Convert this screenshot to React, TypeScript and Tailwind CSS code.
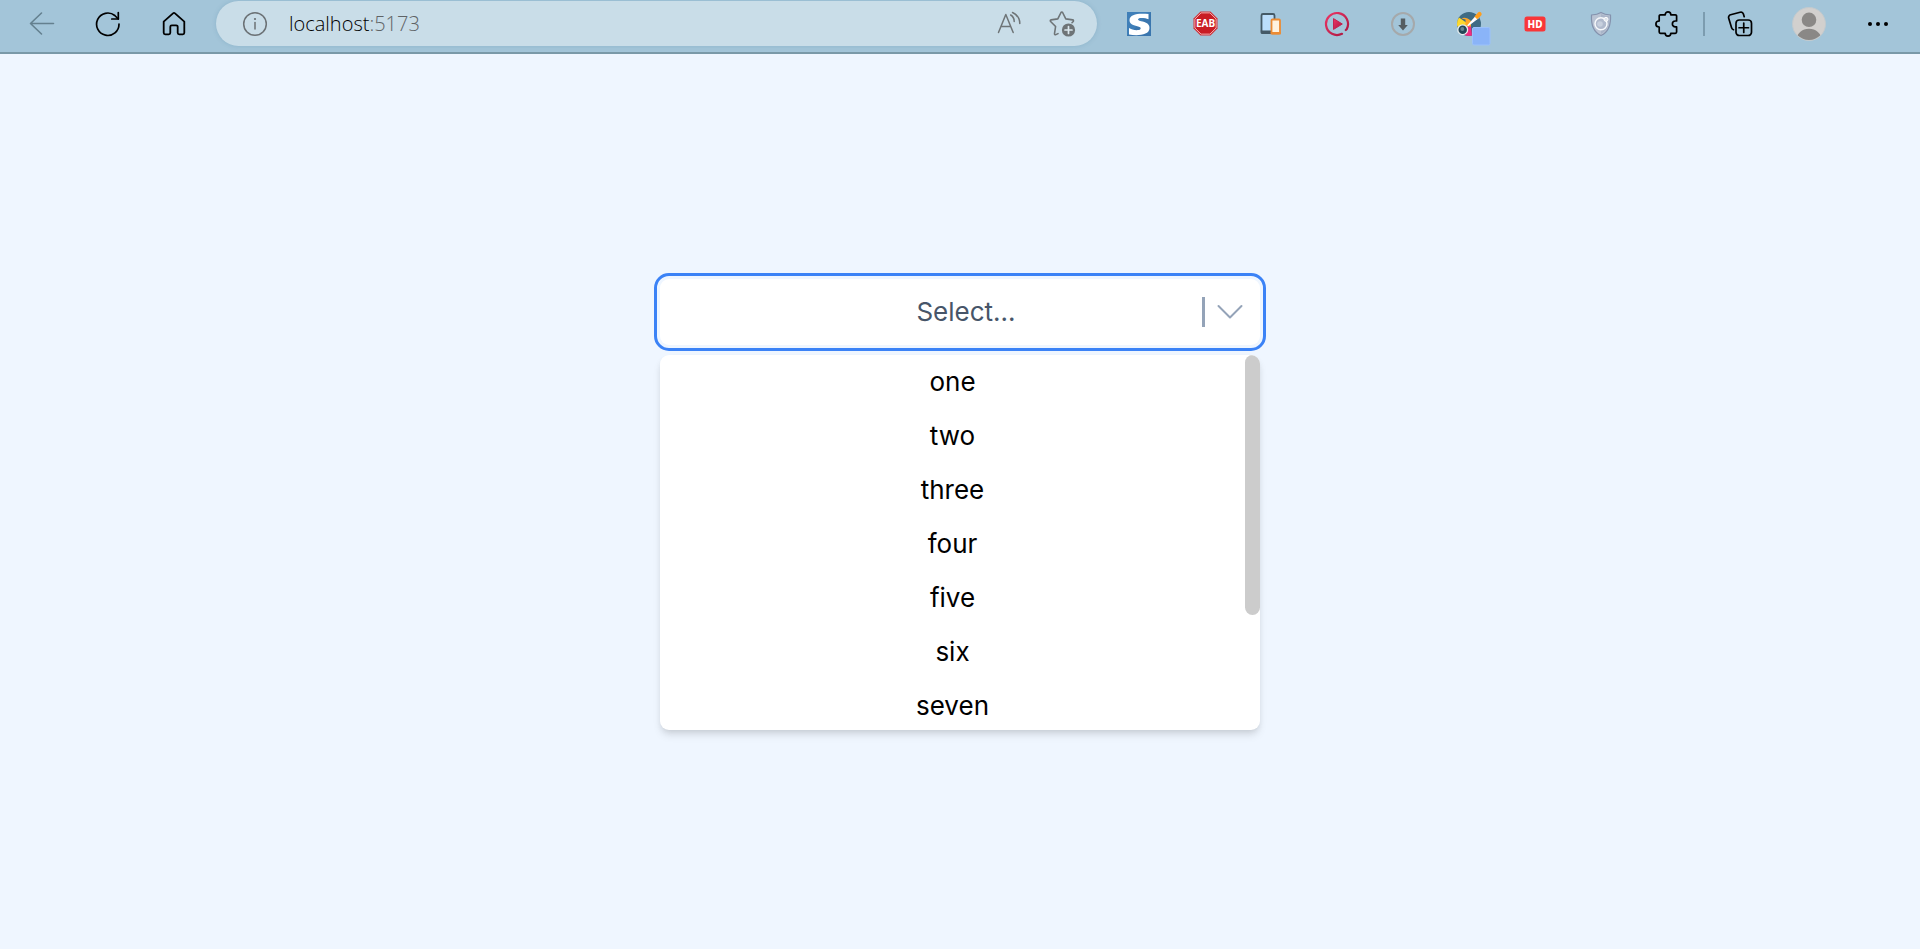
import { useState, type ReactNode } from "react";

const OPTIONS = ["one", "two", "three", "four", "five", "six", "seven"];

function ToolButton({ label, width = "w-[66px]", children }: { label: string; width?: string; children: ReactNode }) {
  return (
    <button type="button" aria-label={label} className={`flex h-[45px] shrink-0 items-center justify-center ${width}`}>
      {children}
    </button>
  );
}

function BackIcon() {
  return (
    <svg width="26" height="26" viewBox="0 0 26 26" fill="none" stroke="#64808f" strokeWidth="1.6" strokeLinecap="round" strokeLinejoin="round">
      <path d="M24.5 12.5H1.5M12.5 2L1.5 12.5L12.5 23" />
    </svg>
  );
}

function RefreshIcon() {
  return (
    <svg width="26" height="26" viewBox="0 0 26 26" fill="none" stroke="#000" strokeWidth="1.7" strokeLinecap="round" strokeLinejoin="round">
      <path d="M24 13a11.200 11.200 0 1 1-4.200-8.500L23.300 8" />
      <path d="M23.300 1.500V8h-6.500" />
    </svg>
  );
}

function HomeIcon() {
  return (
    <svg width="26" height="26" viewBox="0 0 26 26" fill="none" stroke="#000" strokeWidth="1.8" strokeLinecap="round" strokeLinejoin="round">
      <path d="M2.700 10.600L12 2.300a1.500 1.500 0 0 1 2 0l9.300 8.300v11.200a1.500 1.500 0 0 1-1.500 1.500h-3.600a1.500 1.500 0 0 1-1.500-1.500v-6a1.500 1.500 0 0 0-1.500-1.500h-4.400a1.500 1.500 0 0 0-1.500 1.500v6a1.500 1.500 0 0 1-1.500 1.500H4.200a1.500 1.500 0 0 1-1.500-1.500z" />
    </svg>
  );
}

function InfoIcon() {
  return (
    <svg width="26" height="26" viewBox="0 0 26 26" fill="none" stroke="#6b7175" strokeWidth="1.5" strokeLinecap="round">
      <circle cx="13" cy="13" r="11.300" />
      <path d="M13 11.500v6.500" />
      <circle cx="13" cy="8" r="1.100" fill="#6b7175" stroke="none" />
    </svg>
  );
}

function ReadAloudIcon() {
  return (
    <svg width="26" height="26" viewBox="0 0 26 26" fill="none" stroke="#6e7477" strokeWidth="1.5" strokeLinecap="round" strokeLinejoin="round">
      <path d="M2.500 21.500L9.800 3.500L17.200 21.500M5 15.500h9.700" />
      <path d="M14.700 4a7.500 7.500 0 0 1 3.500 6.500M16.500 1.500a12 12 0 0 1 7.300 11" />
    </svg>
  );
}

function FavoriteIcon() {
  return (
    <svg width="28" height="28" viewBox="0 0 28 28" fill="none" stroke="#6e7477" strokeWidth="1.6" strokeLinejoin="round" strokeLinecap="round">
      <path d="M9 23.600l-2.100 1c-.8.400-1.500-.2-1.400-1l1.100-7.100-5-5c-.6-.6-.3-1.500.5-1.600l6.700-1 3.200-6.400c.4-.7 1.200-.7 1.600 0l3.200 6.400 6.900 1c.8.1 1 1 .5 1.600l-1.200 1.200" />
      <circle cx="19.500" cy="20" r="6.600" fill="#6e7477" stroke="none" />
      <path d="M19.500 16.500v7M16 20h7" stroke="#dbe7ee" strokeWidth="1.700" />
    </svg>
  );
}

function SLogo() {
  return (
    <svg width="24" height="24" viewBox="0 0 24 24">
      <rect width="24" height="24" fill="#3f7fb8" />
      <path d="M0 24L24 0v24z" fill="#32669c" opacity=".35" />
      <path d="M21.500 2C12 1 2.500 1.800 2.500 8.200c0 5 6.500 5.300 10 6.700 2 .8 1.500 3-1.500 3.200-3.500.3-7-1-9-2.100v6.500c8 1.500 20.500 1 20.500-6.500 0-5.500-6-6-10-7.200-2.500-.8-1.500-2.600 1.500-2.700 2.500-.1 5.500.4 7.500 1.200z" fill="#fff" />
    </svg>
  );
}

function StopLogo() {
  return (
    <svg width="25" height="25" viewBox="0 0 25 25">
      <path d="M7.500.5h10l7 7v10l-7 7h-10l-7-7v-10z" fill="#d2333a" />
      <path d="M8.100 1.900h8.800l6.200 6.200v8.800l-6.200 6.200H8.100l-6.200-6.200V8.100z" fill="#c91c24" stroke="#eea8ab" strokeWidth="1" />
      <text x="12.500" y="16.200" textAnchor="middle" fontSize="10" fontWeight="700" fill="#fff" fontFamily="Noto Sans, sans-serif">EAB</text>
    </svg>
  );
}

function DevicesIcon() {
  return (
    <svg width="24" height="24" viewBox="0 0 24 24">
      <rect x="2.500" y="2" width="13" height="18" rx="1.500" fill="#bbdefb" stroke="#455a66" strokeWidth="1.800" />
      <path d="M1.600 18.500h14.800v2a1.500 1.500 0 0 1-1.500 1.500H3.100a1.500 1.500 0 0 1-1.500-1.500z" fill="#455a66" />
      <rect x="12.500" y="7.500" width="8.500" height="14" rx="1" fill="#fff3e0" stroke="#ec8b32" strokeWidth="1.800" />
      <path d="M11.700 20h10.100v2.400H11.700z" fill="#ec8b32" />
    </svg>
  );
}

function PlayIcon() {
  return (
    <svg width="26" height="26" viewBox="0 0 26 26" fill="none">
      <defs>
        <linearGradient id="playGradient" x1="0" y1="0" x2="1" y2="1">
          <stop offset="0" stopColor="#ee3566" />
          <stop offset="1" stopColor="#a8173f" />
        </linearGradient>
      </defs>
      <path d="M18 22.800a11 11 0 1 1 4.800-4.800l-1 1" stroke="url(#playGradient)" strokeWidth="2.200" strokeLinecap="round" />
      <path d="M9.500 7.600L18.300 13L9.500 18.400z" fill="url(#playGradient)" stroke="#c4244f" strokeLinejoin="round" />
    </svg>
  );
}

function DownloadIcon() {
  return (
    <svg width="26" height="26" viewBox="0 0 26 26" fill="none">
      <circle cx="13" cy="13" r="11" stroke="#a5a9ab" strokeWidth="2" />
      <path d="M10.800 7.500h4.400v6.500h2.600L13 19.500L8.200 14h2.600z" fill="#555d61" />
    </svg>
  );
}

function PaletteIcon() {
  return (
    <svg width="36" height="36" viewBox="0 0 36 36" className="translate-x-[5px] translate-y-[5px]">
      <circle cx="13" cy="13" r="12" fill="#3f6b83" />
      <path d="M13 13.500L3 6.500A12 12 0 0 0 1 13c0 1 .2 2 .5 2.800h11z" fill="#fed92d" />
      <path d="M5.500 7.500C8 6 11.500 6.500 15 10v6H9.500V8.500z" fill="#ffa726" />
      <path d="M9.500 15.500h5.500l1 9a12 12 0 0 1-7-.300z" fill="#f02c80" />
      <circle cx="6.700" cy="18.700" r="4.900" fill="#244656" stroke="#e8eff2" strokeWidth="1.300" />
      <circle cx="6.300" cy="18" r="2" fill="#668492" />
      <path d="M12 14.500L20.500 5l1.800 1.800z" fill="#fff" stroke="#fff" strokeWidth="1.300" strokeLinejoin="round" />
      <path d="M18.500 5.500l3.500-4a2.200 2.200 0 0 1 3.200 3l-4 3.700z" fill="#ff9e1c" />
      <rect x="16.500" y="16.500" width="17.500" height="17.500" rx="1.500" fill="#8ab4f8" stroke="#9cc2fb" />
    </svg>
  );
}

function HdIcon() {
  return (
    <svg width="22" height="16" viewBox="0 0 22 16">
      <rect x=".5" y=".5" width="21" height="15" rx="2.500" fill="#f93638" />
      <text x="11" y="11.700" textAnchor="middle" fontSize="10" fontWeight="800" fill="#fff" fontFamily="Noto Sans, sans-serif">HD</text>
    </svg>
  );
}

function ShieldIcon() {
  return (
    <svg width="24" height="26" viewBox="0 0 24 26">
      <path d="M12 1.500c3 1.800 6 2.300 9.500 2.500.5 9-1.500 17-9.500 20.500C4 21 2 13 2.500 4 6 3.800 9 3.300 12 1.500z" fill="#b9c3d3" stroke="#8492ad" strokeWidth="1.200" />
      <path d="M12 3v20c7-3.500 8.500-10.500 8.300-17.700C17.500 5.200 14.500 4.500 12 3z" fill="#a9b4c8" />
      <circle cx="12" cy="12.800" r="6" fill="#b0bacd" stroke="#f6f8fb" strokeWidth="1.500" />
      <circle cx="11" cy="13" r="2.800" fill="#c7d0de" />
      <circle cx="17" cy="8.300" r="2" fill="#dfe5ee" stroke="#fff" strokeWidth="1" />
    </svg>
  );
}

function PuzzleIcon() {
  return (
    <svg width="26" height="26" viewBox="0 0 26 26" fill="none" stroke="#000" strokeWidth="1.700" strokeLinejoin="round">
      <path d="M6.500 3.800h4.700c0-3.800 5.600-3.800 5.600 0h4.500a1.300 1.300 0 0 1 1.300 1.300v4.900h-1.200c-4 0-4 5.800 0 5.800h1.200V21a1.300 1.300 0 0 1-1.300 1.300h-4.500c0 3.700-5.600 3.700-5.600 0H6.500A1.300 1.300 0 0 1 5.200 21v-5c-4.400 0-4.400-6 0-6V5.100a1.300 1.300 0 0 1 1.300-1.300z" />
    </svg>
  );
}

function CollectionsIcon() {
  return (
    <svg width="26" height="26" viewBox="0 0 26 26" fill="none" stroke="#000" strokeWidth="1.700" strokeLinecap="round" strokeLinejoin="round">
      <path d="M6.500 18.700a3 3 0 0 1-1.900-2L1.700 7.200a2.700 2.700 0 0 1 1.900-3.400l9.500-2.600a2.700 2.700 0 0 1 3.300 1.900l.8 2.600" />
      <rect x="9" y="9" width="15.500" height="15.500" rx="3.300" />
      <path d="M16.750 12v9.500M12 16.750h9.500" />
    </svg>
  );
}

function AvatarIcon() {
  return (
    <svg width="34" height="34" viewBox="0 0 34 34">
      <defs>
        <clipPath id="avatarClip"><circle cx="17" cy="17" r="16" /></clipPath>
      </defs>
      <circle cx="17" cy="17" r="16.500" fill="#d2d0ce" stroke="#c2cace" />
      <circle cx="17" cy="12.800" r="7.300" fill="#8a8886" />
      <ellipse cx="17" cy="32.500" rx="12.500" ry="10.700" fill="#8a8886" clipPath="url(#avatarClip)" />
    </svg>
  );
}

function MoreIcon() {
  return (
    <svg width="22" height="6" viewBox="0 0 22 6">
      <circle cx="3" cy="3" r="2" />
      <circle cx="11" cy="3" r="2" />
      <circle cx="19" cy="3" r="2" />
    </svg>
  );
}

function Toolbar() {
  return (
    <header className="flex items-center border-b-2 border-[#7a99a8] bg-[#a3c5d9] pt-px pr-[7px] pb-[6px] pl-[9px]">
      <ToolButton label="Back"><BackIcon /></ToolButton>
      <ToolButton label="Refresh"><RefreshIcon /></ToolButton>
      <ToolButton label="Home"><HomeIcon /></ToolButton>
      <div className="mx-[9px] flex h-[45px] min-w-0 flex-1 items-center rounded-full bg-[#c9dde8] pr-[7px] pl-[6px] shadow-[0_0_4px_rgba(90,140,170,0.3)]">
        <ToolButton label="Site information"><InfoIcon /></ToolButton>
        <a href="http://localhost:5173" className="min-w-0 flex-1 truncate pl-px font-['Open_Sans','Noto_Sans',sans-serif] text-[20px] leading-[28px] font-[350] text-black">
          localhost<span className="text-[#5f6366]">:5173</span>
        </a>
        <ToolButton label="Read aloud" width="w-[54px]"><ReadAloudIcon /></ToolButton>
        <ToolButton label="Add to favorites" width="w-[54px]"><FavoriteIcon /></ToolButton>
      </div>
      <ToolButton label="S extension"><SLogo /></ToolButton>
      <ToolButton label="Ad blocker"><StopLogo /></ToolButton>
      <ToolButton label="Device preview"><DevicesIcon /></ToolButton>
      <ToolButton label="Video player"><PlayIcon /></ToolButton>
      <ToolButton label="Downloads"><DownloadIcon /></ToolButton>
      <ToolButton label="Color picker"><PaletteIcon /></ToolButton>
      <ToolButton label="Video quality"><HdIcon /></ToolButton>
      <ToolButton label="Privacy"><ShieldIcon /></ToolButton>
      <ToolButton label="Extensions"><PuzzleIcon /></ToolButton>
      <div className="ml-[3px] h-[24px] w-[2px] shrink-0 bg-[#7c9caf]" />
      <ToolButton label="Collections" width="w-[70px]"><CollectionsIcon /></ToolButton>
      <ToolButton label="Profile" width="w-[68px]"><AvatarIcon /></ToolButton>
      <ToolButton label="Settings and more" width="w-[70px]"><MoreIcon /></ToolButton>
    </header>
  );
}

function SelectBox() {
  const [open, setOpen] = useState(true);
  const [value, setValue] = useState("");

  return (
    <div className="relative w-full max-w-[600px]">
      <button
        type="button"
        aria-haspopup="listbox"
        aria-expanded={open}
        onClick={() => setOpen(!open)}
        className="flex h-[66px] w-full items-center rounded-[9px] bg-white pr-[17px] pl-[70px] text-[26px] leading-[42px] text-[#475569] outline-3 outline-offset-3 outline-[#3b82f6]"
      >
        <span className="flex-1 text-center">{value || "Select..."}</span>
        <span className="h-[30px] w-[3px] bg-[#94a3b8]" />
        <svg width="26" height="26" viewBox="0 0 26 26" fill="none" stroke="#94a3b8" strokeWidth="2" strokeLinecap="round" strokeLinejoin="round" className="ml-[12px]">
          <path d="M1.500 7L13 18.500L24.500 7" />
        </svg>
      </button>
      {open && (
        <div className="absolute inset-x-0 top-full mt-[10px] flex h-[375px] overflow-hidden rounded-[9px] bg-white shadow-[0_6px_9px_-1px_rgba(0,0,0,0.1),0_3px_6px_-2px_rgba(0,0,0,0.1)]">
          <ul role="listbox" aria-label="Options" className="flex-1 text-center text-[26px] leading-[42px] text-black">
            {OPTIONS.map((option) => (
              <li key={option} role="option" aria-selected={option === value}>
                <button
                  type="button"
                  className="block w-full py-[6px]"
                  onClick={() => {
                    setValue(option);
                    setOpen(false);
                  }}
                >
                  {option}
                </button>
              </li>
            ))}
          </ul>
          <div className="w-[15px]">
            <div className="h-[260px] rounded-full bg-[#cccccc]" />
          </div>
        </div>
      )}
    </div>
  );
}

export default function App() {
  return (
    <div className="flex min-h-screen flex-col bg-[#eff6ff] font-[Inter,Roboto,sans-serif]">
      <Toolbar />
      <main className="flex flex-1 items-start justify-center px-4 pt-[225px]">
        <SelectBox />
      </main>
    </div>
  );
}
